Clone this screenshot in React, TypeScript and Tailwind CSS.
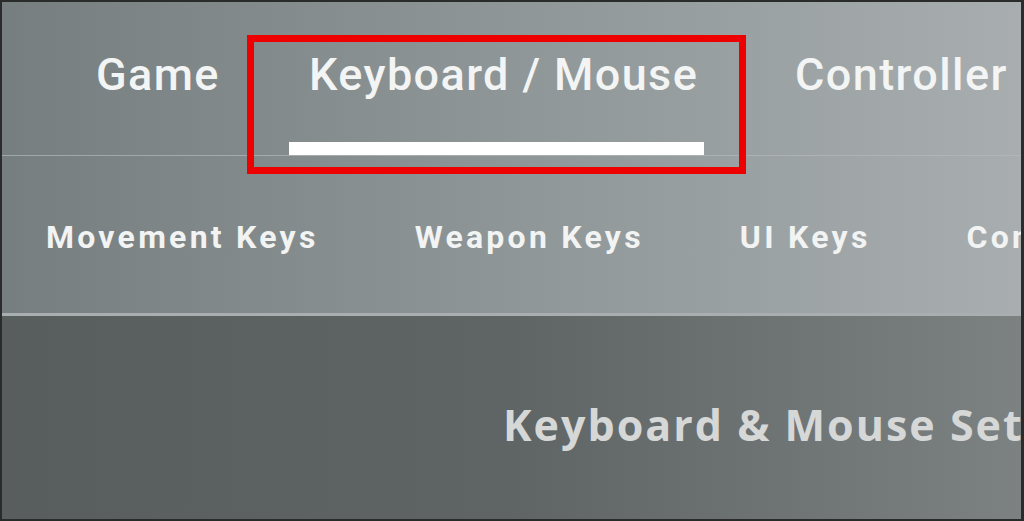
const tabs = [
  { label: "Game", active: false },
  { label: "Keyboard / Mouse", active: true },
  { label: "Controller", active: false },
];

const subTabs = ["Movement Keys", "Weapon Keys", "UI Keys", "Controller Keys"];

export default function App() {
  return (
    <div className="relative h-[521px] w-[1024px] overflow-hidden border-2 border-r-[3px] border-[#2a2c2c] bg-[#5a5f5f]">
      {/* upper area: tabs + sub tabs */}
      <div className="bg-linear-to-r from-[#777e7f] via-[#8f9697] to-[#a8aeaf]">
        <nav className="flex h-[153px] items-start pl-[94px] pt-[50px] font-['Roboto',sans-serif] text-[45px] font-medium leading-[45px] tracking-[1.4px] text-[#f3f4f4]">
          <div className="flex w-[193px] flex-col">
            <span className="whitespace-nowrap">{tabs[0].label}</span>
          </div>
          <div className="flex w-[415px] flex-col">
            <span className="whitespace-nowrap pl-[20px]">{tabs[1].label}</span>
            <div className="mt-[45px] h-[13px] w-full bg-white" />
          </div>
          <div className="ml-[91px] flex flex-col">
            <span className="whitespace-nowrap">{tabs[2].label}</span>
          </div>
        </nav>
        <div className="h-px bg-[#b3b8b9]/70" />
        <div className="flex h-[157px] items-start gap-[96px] pl-[44px] pt-[65px] font-['Roboto',sans-serif] text-[32px] font-bold leading-[32px] tracking-[3.25px] text-[#f2f3f3]">
          {subTabs.map((s) => (
            <span key={s} className="whitespace-nowrap">
              {s}
            </span>
          ))}
        </div>
      </div>
      <div className="h-[3px] bg-[#a9afb0]" />

      {/* lower content */}
      <div className="h-[203px] bg-linear-to-r from-[#585d5d] via-[#5f6565] to-[#7c8282] pl-[501px] pt-[87px]">
        <h2 className="whitespace-nowrap font-['Open_Sans',sans-serif] text-[43px] font-bold leading-[43px] tracking-[2px] text-[#d6d7d7]">
          Keyboard &amp; Mouse Settings
        </h2>
      </div>

      {/* highlight annotation */}
      <div className="pointer-events-none absolute left-[245px] top-[33px] h-[139px] w-[499px] border-[7px] border-[#ee0000]" />
    </div>
  );
}
